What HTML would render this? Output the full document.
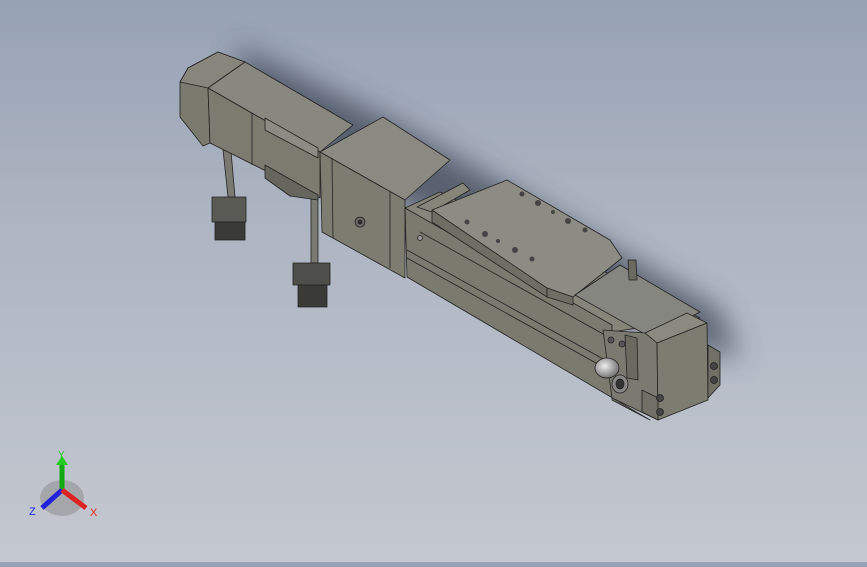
<!DOCTYPE html>
<html><head><style>
html,body{margin:0;padding:0}
body{width:867px;height:562px;overflow:hidden;background:linear-gradient(180deg,#97a2b4 0%,#aeb5c2 40%,#c4c8d0 100%);font-family:"Liberation Sans",sans-serif}
</style></head><body>
<svg width="867" height="562" viewBox="0 0 867 562" xmlns="http://www.w3.org/2000/svg">
<defs>
<filter id="b" x="-20%" y="-50%" width="140%" height="200%"><feGaussianBlur stdDeviation="14"/></filter>
<radialGradient id="cy" cx="40%" cy="40%" r="60%"><stop offset="0" stop-color="#eee"/><stop offset="1" stop-color="#777"/></radialGradient>
</defs>
<polygon points="235,45 390,120 470,165 720,310 740,360 640,330 420,215 250,110" fill="#3e4455" opacity="0.75" filter="url(#b)"/>
<g stroke="#222" stroke-width="0.8" stroke-linejoin="round">
<!-- cables -->
<polygon points="222,140 230,140 235,197 228,197" fill="#7a7a72"/>
<rect x="311" y="198" width="7" height="65" fill="#7a7a72"/>
<!-- motor cap -->
<polygon points="180,82 188,68 218,52 245,62 208,88 210,143 203,146 180,117" fill="#7a7a6e"/>
<polygon points="188,68 218,52 245,62 208,88 180,82" fill="#86867c"/>
<!-- motor -->
<polygon points="208,88 245,62 353,125 320,152" fill="#888880"/>
<polygon points="208,88 320,152 320,198 210,143" fill="#7b7b6f"/>
<line x1="252" y1="113" x2="252" y2="165"/>
<polygon points="265,118 318,148 318,158 265,130" fill="#8c8c84"/>
<polygon points="265,165 318,195 318,200 290,196 265,178" fill="#66665e"/>
<!-- gearbox -->
<polygon points="320,152 383,117 450,160 405,200" fill="#8a8a82"/>
<polygon points="320,152 405,200 405,278 322,232" fill="#7c7c70"/>
<line x1="332" y1="158" x2="333" y2="238"/>
<line x1="390" y1="192" x2="390" y2="268"/>
<circle cx="360" cy="222" r="5" fill="#6a6a62"/><circle cx="360" cy="222" r="2" fill="#333"/>
<!-- rail -->
<polygon points="405,208 440,192 700,318 612,332" fill="#858579"/>
<polygon points="405,208 612,325 612,400 650,420 407,277" fill="#7a7a6e"/>
<line x1="407" y1="250" x2="605" y2="360"/>
<line x1="407" y1="258" x2="605" y2="368"/>
<line x1="420" y1="232" x2="605" y2="335"/>
<circle cx="420" cy="238" r="2.5" fill="#999"/>
<!-- carriage -->
<polygon points="417,207 463,183 470,190 432,212" fill="#858579"/>
<polygon points="432,210 547,285 547,297 432,222" fill="#6e6e64"/>
<polygon points="432,210 507,180 610,240 622,258 573,297 547,288" fill="#8c8c84"/>
<polygon points="547,288 573,297 573,305 547,297" fill="#6e6e64"/>
<polygon points="575,295 620,265 700,312 650,337" fill="#868680"/>
<g fill="#444" stroke="none">
<circle cx="522" cy="194" r="2.5"/><circle cx="538" cy="203" r="3"/><circle cx="553" cy="212" r="2"/><circle cx="568" cy="221" r="3"/><circle cx="585" cy="230" r="2.5"/>
<circle cx="467" cy="222" r="2.5"/><circle cx="485" cy="234" r="3"/><circle cx="498" cy="241" r="2"/><circle cx="515" cy="250" r="3"/><circle cx="532" cy="259" r="2.5"/>
</g>
<polygon points="628,260 636,260 637,280 629,280" fill="#6a6a60"/>
<!-- end block -->
<polygon points="645,333 687,313 707,323 657,343" fill="#8a8a80"/>
<polygon points="603,330 645,333 657,343 658,420 612,398" fill="#7a7a70"/>
<polygon points="657,343 707,323 708,400 658,420" fill="#7c7c70"/>
<polygon points="708,345 720,352 720,385 708,398" fill="#707066"/>
<polygon points="642,390 658,398 658,420 642,412" fill="#707066"/>
<circle cx="714" cy="366" r="3.5" fill="#444"/><circle cx="714" cy="380" r="3.5" fill="#444"/>
<circle cx="660" cy="398" r="3.5" fill="#444"/><circle cx="660" cy="412" r="3.5" fill="#444"/>
<circle cx="611" cy="340" r="3" fill="#555"/><circle cx="622" cy="344" r="3" fill="#555"/>
<polygon points="625,335 637,338 638,380 627,378" fill="#6a6a60"/>
<!-- fitting -->
<ellipse cx="607" cy="368" rx="12" ry="10" fill="url(#cy)"/>
<ellipse cx="620" cy="384" rx="8" ry="9" fill="#888"/><ellipse cx="620" cy="384" rx="4" ry="5" fill="#333"/>
<!-- connectors -->
<rect x="212" y="197" width="34" height="25" fill="#5a5a54"/>
<rect x="215" y="222" width="30" height="18" fill="#3a3a36"/>
<rect x="293" y="263" width="37" height="22" fill="#4e4e4a"/>
<rect x="298" y="285" width="29" height="22" fill="#3a3a36"/>
</g>
<!-- triad -->
<g>
<ellipse cx="62" cy="498" rx="22" ry="18" fill="#888" opacity="0.5"/>
<line x1="62" y1="490" x2="62" y2="463" stroke="#1a1" stroke-width="5"/>
<polygon points="56,465 62,456 68,465" fill="#2c2"/>
<line x1="62" y1="490" x2="42" y2="508" stroke="#22d" stroke-width="5"/>
<line x1="62" y1="490" x2="86" y2="508" stroke="#d22" stroke-width="5"/>
<text x="58" y="458" font-size="10" fill="#2c2">Y</text>
<text x="29" y="515" font-size="11" fill="#22e">Z</text>
<text x="90" y="516" font-size="11" fill="#e22">X</text>
</g>
</svg>
</body></html>
